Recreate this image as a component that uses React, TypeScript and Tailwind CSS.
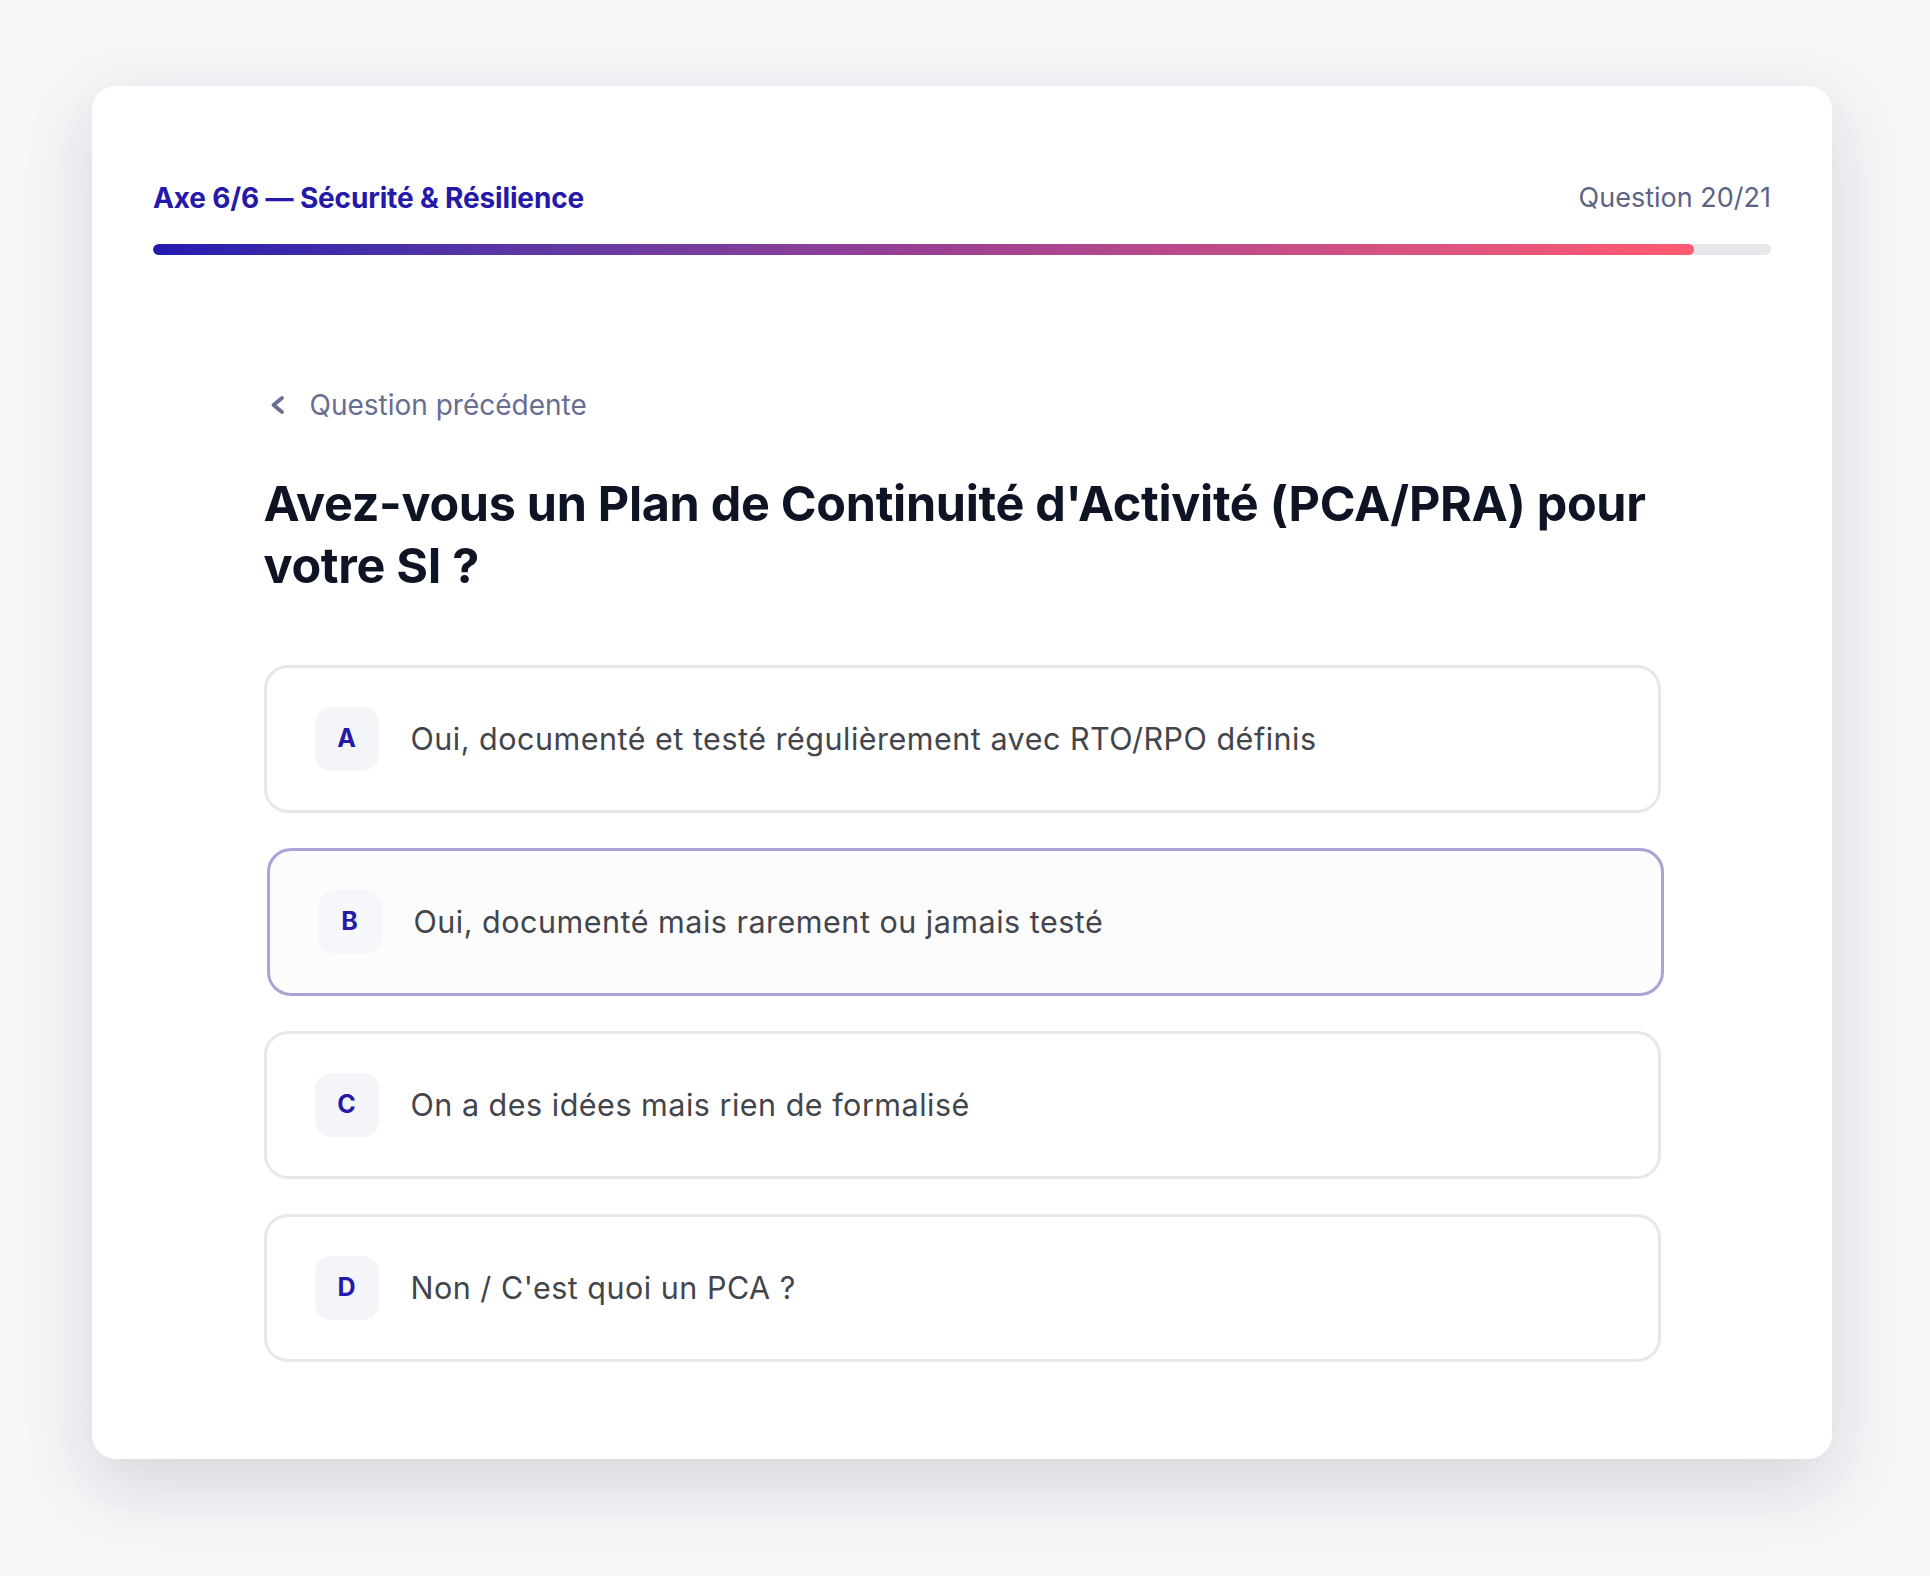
import React from "react";

const options = [
  { letter: "A", text: "Oui, documenté et testé régulièrement avec RTO/RPO définis", selected: false },
  { letter: "B", text: "Oui, documenté mais rarement ou jamais testé", selected: true },
  { letter: "C", text: "On a des idées mais rien de formalisé", selected: false },
  { letter: "D", text: "Non / C'est quoi un PCA ?", selected: false },
];

export default function App() {
  const current = 20;
  const total = 21;
  const pct = (current / total) * 100;

  return (
    <div className="min-h-screen bg-[#f5f6f8] pl-[92px] pt-[86px] pb-[117px] font-[Inter,sans-serif]">
      <div className="w-[1740px] rounded-[24px] bg-white px-[61px] pt-[94px] pb-[97px] shadow-[0_24px_70px_rgba(15,23,42,0.14)]">
        <div className="flex h-[36px] items-center justify-between">
          <span className="text-[28px] font-bold tracking-[-0.15px] text-[#2419a8]">
            Axe 6/6 — Sécurité &amp; Résilience
          </span>
          <span className="text-[27px] text-[#5c6385]">Question 20/21</span>
        </div>

        <div className="mt-[28px] h-[11px] w-full overflow-hidden rounded-full bg-[#e8e8ec]">
          <div
            className="h-full rounded-full bg-linear-to-r from-[#2419b0] via-[#9a3f93] to-[#ff5a70]"
            style={{ width: `${pct}%` }}
          />
        </div>

        <div className="mx-auto mt-[132px] w-[1397px]">
          <button className="ml-[2px] flex h-[36px] items-center gap-[22px] text-[28px] text-[#676e91]">
            <svg width="22" height="22" viewBox="0 0 22 22" fill="none">
              <path
                d="M16 4 L7.5 11 L16 18"
                stroke="#676e91"
                strokeWidth="3.8"
                strokeLinecap="round"
                strokeLinejoin="round"
              />
            </svg>
            <span>Question précédente</span>
          </button>

          <h1 className="mt-[50px] text-[48.5px] font-bold leading-[62px] tracking-[-0.3px] text-[#0e1424]">
            Avez-vous un Plan de Continuité d'Activité (PCA/PRA) pour votre SI ?
          </h1>

          <div className="mt-[68px] flex flex-col gap-[35px]">
            {options.map((o) => (
              <div
                key={o.letter}
                className={
                  o.selected
                    ? "flex translate-x-[3px] items-center gap-[32px] rounded-[24px] border-[3px] border-[#a7a4d6] bg-[#fcfcfd] px-[48px] py-[39px]"
                    : "flex items-center gap-[32px] rounded-[24px] border-[3px] border-[#e7e8eb] bg-white px-[48px] py-[39px]"
                }
              >
                <div
                  className={
                    o.selected
                      ? "flex h-16 w-16 shrink-0 items-center justify-center rounded-[16px] bg-[#f6f7fa] text-[25px] font-bold text-[#2419a8]"
                      : "flex h-16 w-16 shrink-0 items-center justify-center rounded-[16px] bg-[#f4f5f8] text-[25px] font-bold text-[#2419a8]"
                  }
                >
                  {o.letter}
                </div>
                <span className="text-[30.5px] leading-[40px] tracking-[0.5px] text-[#43454c]">{o.text}</span>
              </div>
            ))}
          </div>
        </div>
      </div>
    </div>
  );
}
